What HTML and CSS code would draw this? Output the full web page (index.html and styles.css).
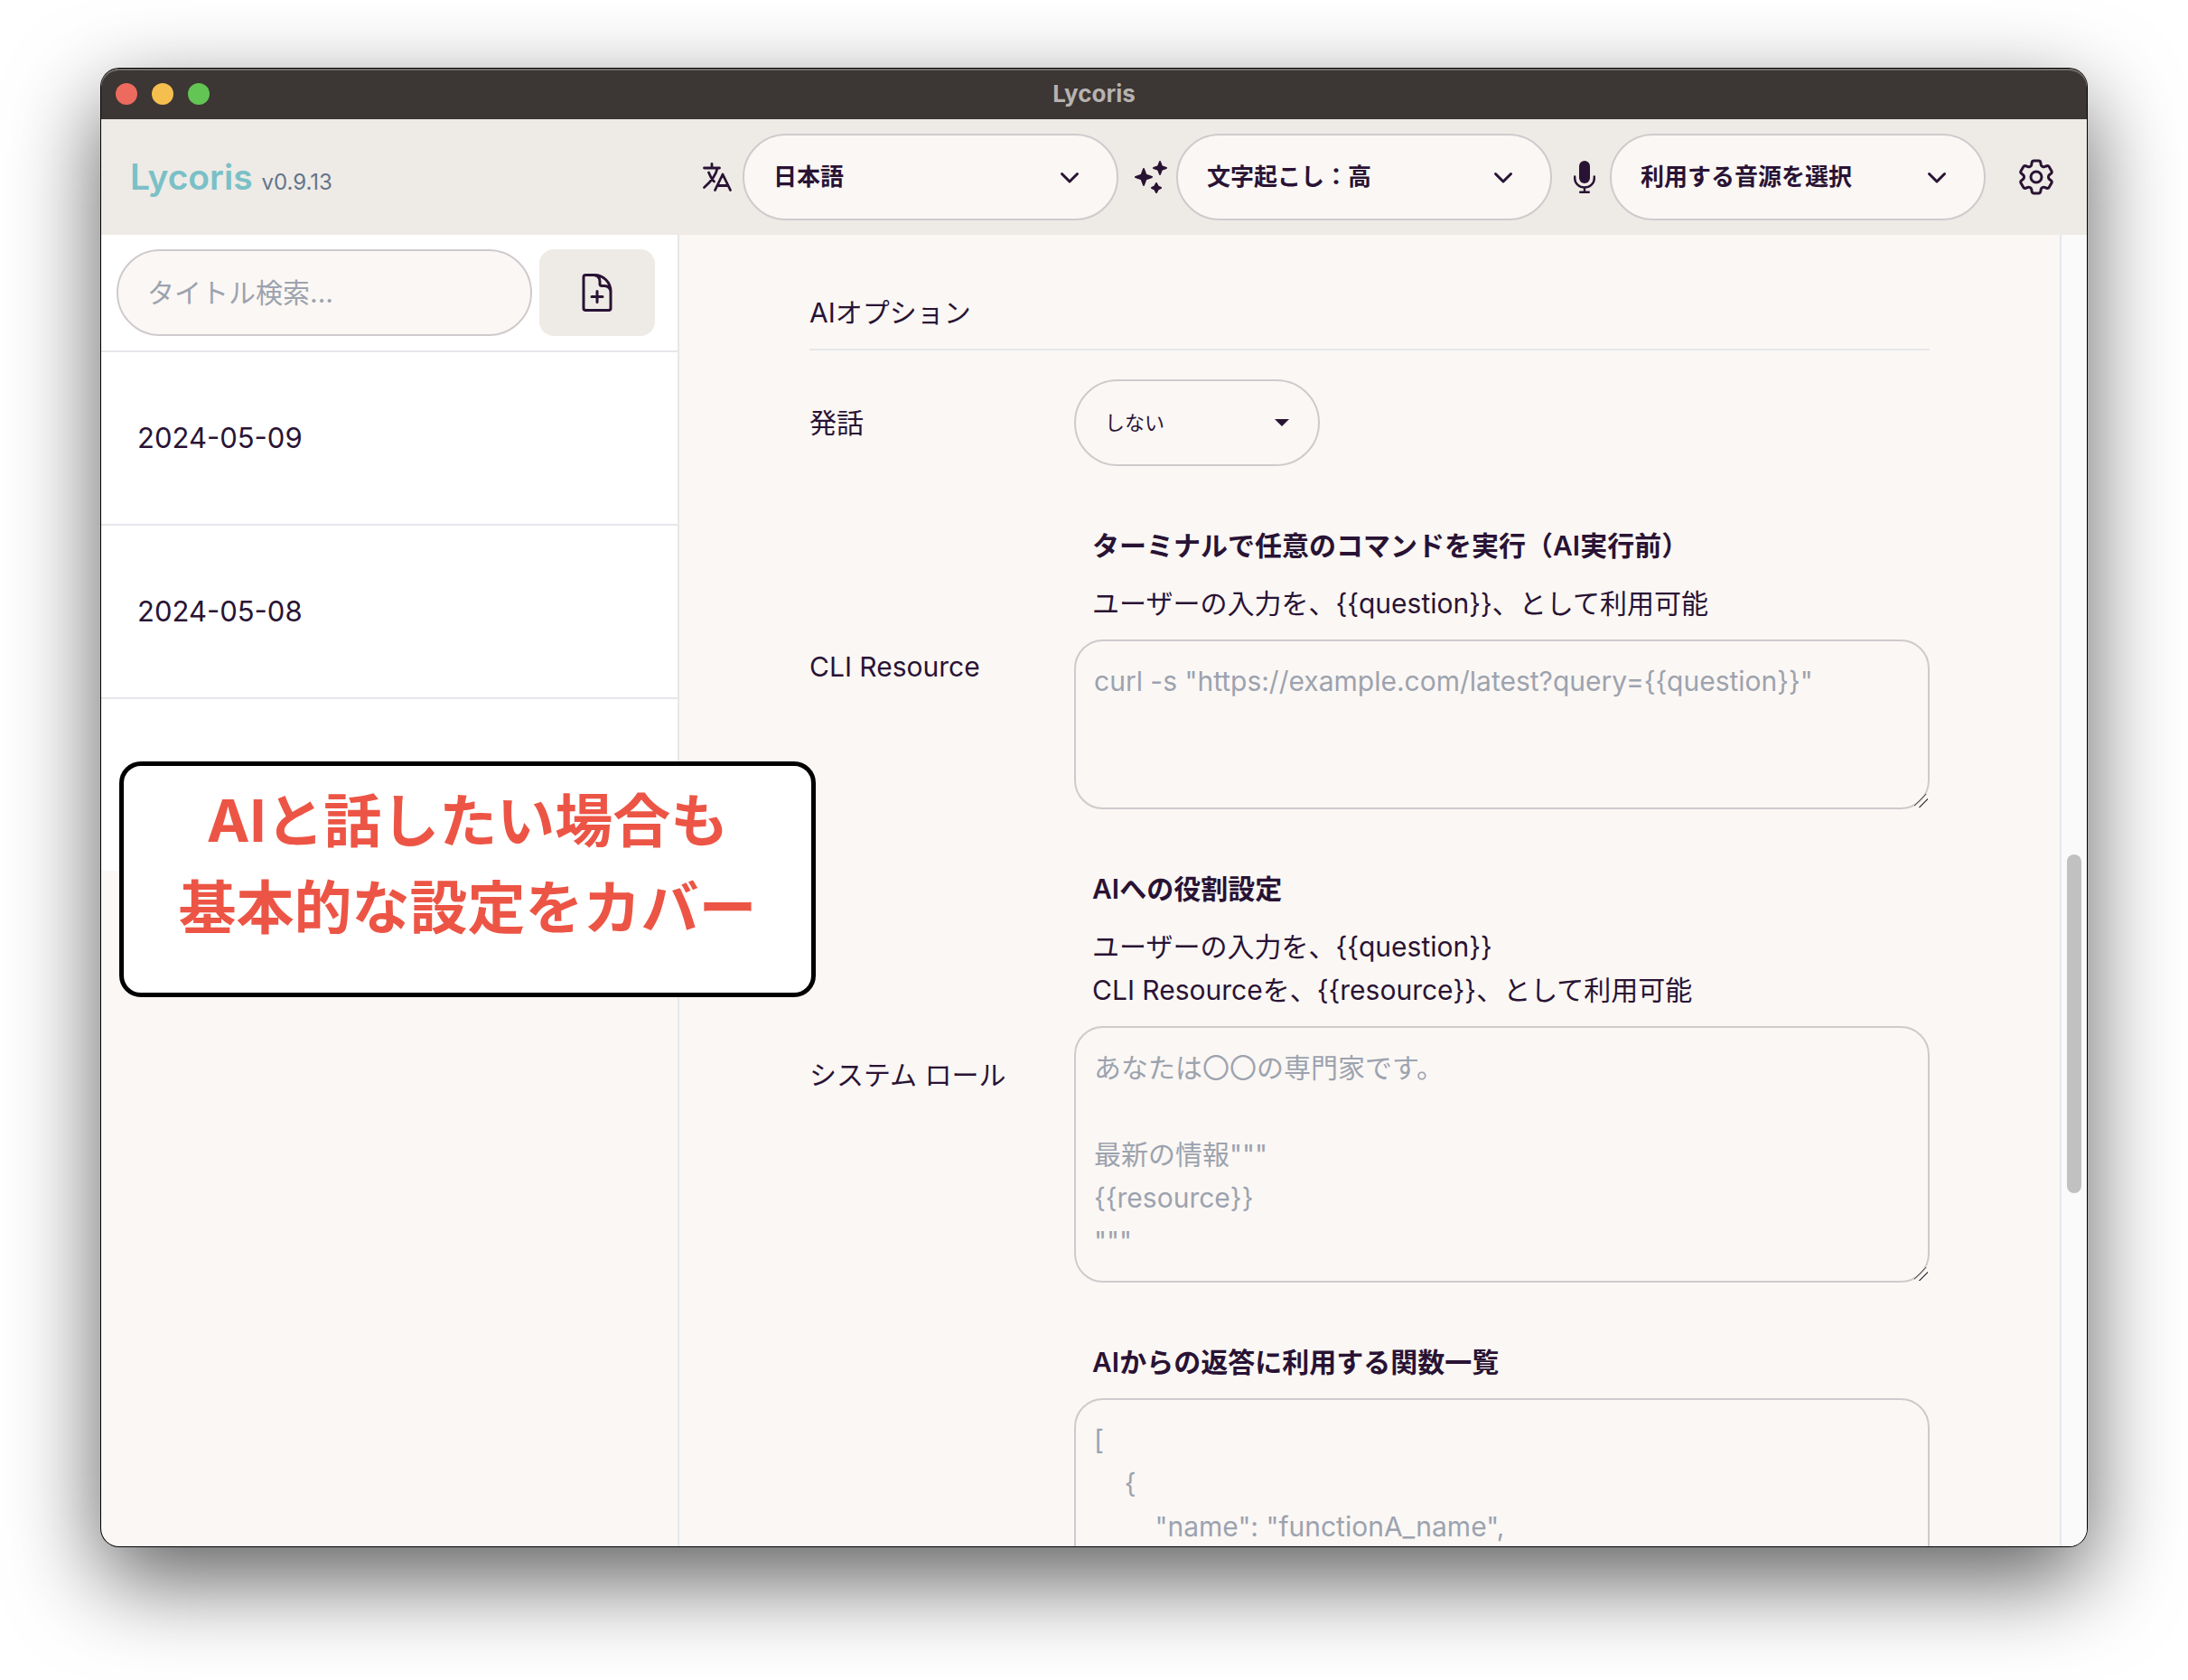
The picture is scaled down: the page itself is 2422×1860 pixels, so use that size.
FILE: index.html
```html
<!DOCTYPE html>
<html lang="ja">
<head>
<meta charset="utf-8">
<meta name="viewport" content="width=device-width, initial-scale=1">
<title>Lycoris</title>
<link rel="stylesheet" href="styles.css">
</head>
<body>
<div class="window">
  <div class="titlebar">
    <div class="lights">
      <span class="light light-close"></span>
      <span class="light light-min"></span>
      <span class="light light-max"></span>
    </div>
    <span class="titlebar-text">Lycoris</span>
  </div>

  <header class="header">
    <h1 class="brand">Lycoris <small class="version">v0.9.13</small></h1>
    <div class="tools">
      <div class="tool">
        <svg class="tool-icon" viewBox="0 0 40 40" fill="none" stroke="currentColor" stroke-width="2.8" stroke-linecap="round" stroke-linejoin="round" aria-hidden="true">
          <path d="M14 5.500V9.500M5.500 10H22.500M20 10.500C18.500 18 13 25 5.500 31.500M10.500 15C12 19 14 22.500 16.500 25M17.500 34.500L26 17L34.500 34.500M20.500 29.500H31.500"/>
        </svg>
        <div class="picker">
          <select class="picker-select" aria-label="言語"><option>日本語</option></select>
          <svg class="picker-arrow" viewBox="0 0 32 32" fill="none" stroke="currentColor" stroke-width="3" stroke-linecap="round" stroke-linejoin="round" aria-hidden="true"><path d="M7.500 12.500L16 21L24.500 12.500"/></svg>
        </div>
      </div>
      <div class="tool">
        <svg class="tool-icon" viewBox="0 0 40 40" fill="currentColor" stroke="currentColor" stroke-width="2" stroke-linejoin="round" aria-hidden="true">
          <path d="M12 11L14.400 17.600L21 20L14.400 22.400L12 29L9.600 22.400L3 20L9.600 17.600Z"/>
          <path d="M30 3L31.900 8.100L37 10L31.900 11.900L30 17L28.100 11.900L23 10L28.100 8.100Z"/>
          <path d="M26 27L27.700 30.300L31 32L27.700 33.700L26 37L24.300 33.700L21 32L24.300 30.300Z"/>
        </svg>
        <div class="picker">
          <select class="picker-select" aria-label="文字起こしの精度"><option>文字起こし：高</option></select>
          <svg class="picker-arrow" viewBox="0 0 32 32" fill="none" stroke="currentColor" stroke-width="3" stroke-linecap="round" stroke-linejoin="round" aria-hidden="true"><path d="M7.500 12.500L16 21L24.500 12.500"/></svg>
        </div>
      </div>
      <div class="tool">
        <svg class="tool-icon" viewBox="0 0 40 40" fill="none" stroke="currentColor" stroke-width="2.400" stroke-linecap="round" aria-hidden="true">
          <rect x="14" y="2" width="12" height="25" rx="6" fill="currentColor" stroke="none"/>
          <path d="M9.200 19.500V21.500A10.800 10 0 0 0 30.800 21.500V19.500M20 32V36.500M15.200 36.800H24.800"/>
        </svg>
        <div class="picker">
          <select class="picker-select" aria-label="音源"><option>利用する音源を選択</option></select>
          <svg class="picker-arrow" viewBox="0 0 32 32" fill="none" stroke="currentColor" stroke-width="3" stroke-linecap="round" stroke-linejoin="round" aria-hidden="true"><path d="M7.500 12.500L16 21L24.500 12.500"/></svg>
        </div>
      </div>
    </div>
    <button class="settings" type="button" aria-label="設定">
      <svg class="icon" viewBox="0 0 24 24" fill="none" stroke="currentColor" stroke-width="1.5" stroke-linecap="round" stroke-linejoin="round" aria-hidden="true">
        <path d="M9.594 3.940c.09-.542.56-.94 1.110-.94h2.593c.55 0 1.020.398 1.110.94l.213 1.281c.063.374.313.686.645.87.074.04.147.083.22.127.325.196.72.257 1.075.124l1.217-.456a1.125 1.125 0 0 1 1.370.49l1.296 2.247a1.125 1.125 0 0 1-.26 1.431l-1.003.827c-.293.241-.438.613-.43.992a7.723 7.723 0 0 1 0 .255c-.008.378.137.75.43.991l1.004.827c.424.35.534.955.26 1.430l-1.298 2.247a1.125 1.125 0 0 1-1.369.491l-1.217-.456c-.355-.133-.75-.072-1.076.124a6.470 6.470 0 0 1-.22.128c-.331.183-.581.495-.644.869l-.213 1.281c-.09.543-.56.94-1.110.94h-2.594c-.55 0-1.019-.398-1.110-.94l-.213-1.281c-.062-.374-.312-.686-.644-.87a6.520 6.520 0 0 1-.22-.127c-.325-.196-.72-.257-1.076-.124l-1.217.456a1.125 1.125 0 0 1-1.369-.49l-1.297-2.247a1.125 1.125 0 0 1 .26-1.431l1.004-.827c.292-.24.437-.613.43-.991a6.932 6.932 0 0 1 0-.255c.007-.38-.138-.751-.43-.992l-1.004-.827a1.125 1.125 0 0 1-.26-1.430l1.297-2.247a1.125 1.125 0 0 1 1.370-.491l1.216.456c.356.133.751.072 1.076-.124.072-.044.146-.086.22-.128.332-.183.582-.495.644-.869l.214-1.280Z"/>
        <path d="M15 12a3 3 0 1 1-6 0 3 3 0 0 1 6 0Z"/>
      </svg>
    </button>
  </header>

  <div class="body">
    <aside class="sidebar">
      <div class="search">
        <input class="search-input" type="text" placeholder="タイトル検索..." aria-label="タイトル検索">
        <button class="new-note" type="button" aria-label="新規作成">
          <svg class="icon" viewBox="0 0 24 24" fill="none" stroke="currentColor" stroke-width="1.5" stroke-linecap="round" stroke-linejoin="round" aria-hidden="true">
            <path d="M19.500 14.250v-2.625a3.375 3.375 0 0 0-3.375-3.375h-1.500A1.125 1.125 0 0 1 13.500 7.125v-1.500a3.375 3.375 0 0 0-3.375-3.375H8.250m3.750 9v6m3-3H9m1.500-12H5.625c-.621 0-1.125.504-1.125 1.125v17.250c0 .621.504 1.125 1.125 1.125h12.750c.621 0 1.125-.504 1.125-1.125V11.250a9 9 0 0 0-9-9Z"/>
          </svg>
        </button>
      </div>
      <ul class="notes">
        <li class="note">2024-05-09</li>
        <li class="note">2024-05-08</li>
        <li class="note"></li>
      </ul>
    </aside>

    <main class="main">
      <form class="options">
        <h2 class="section-title">AIオプション</h2>

        <div class="row">
          <label class="row-label" for="speech">発話</label>
          <div class="speech">
            <select class="speech-select" id="speech"><option>しない</option></select>
            <span class="caret"></span>
          </div>
        </div>

        <div class="row">
          <label class="row-label" for="cli">CLI Resource</label>
          <div class="field">
            <strong class="field-title">ターミナルで任意のコマンドを実行（AI実行前）</strong>
            <p class="field-note">ユーザーの入力を、{{question}}、として利用可能</p>
            <textarea class="field-text" id="cli" rows="3" placeholder="curl -s &quot;https://example.com/latest?query={{question}}&quot;"></textarea>
          </div>
        </div>

        <div class="row">
          <label class="row-label" for="role">システム ロール</label>
          <div class="field">
            <strong class="field-title">AIへの役割設定</strong>
            <p class="field-note">ユーザーの入力を、{{question}}<br>CLI Resourceを、{{resource}}、として利用可能</p>
            <textarea class="field-text" id="role" rows="5" placeholder="あなたは〇〇の専門家です。&#10;&#10;最新の情報&quot;&quot;&quot;&#10;{{resource}}&#10;&quot;&quot;&quot;"></textarea>
          </div>
        </div>

        <div class="row">
          <span class="row-label"></span>
          <div class="field">
            <strong class="field-title">AIからの返答に利用する関数一覧</strong>
            <textarea class="field-text" rows="12" aria-label="関数一覧" placeholder="[&#10;    {&#10;        &quot;name&quot;: &quot;functionA_name&quot;,"></textarea>
          </div>
        </div>
      </form>
    </main>
    <div class="scrollbar"><div class="thumb"></div></div>
  </div>

  <p class="callout">AIと話したい場合も<br>基本的な設定をカバー</p>
</div>
</body>
</html>
```

FILE: styles.css
```css
:root {
  --ink: #291334;
  --paper: #fbf7f4;
  --sand: #eeebe6;
  --line: #e5e7eb;
  --edge: #cfcacd;
  --hint: #9ca3af;
}

* {
  box-sizing: border-box;
}

body {
  margin: 0;
  height: 100vh;
  padding: 76px 112px 148px;
  background: #fff;
  color: var(--ink);
  font: 30px/48px Inter, "Noto Sans CJK JP", sans-serif;
  overflow: hidden;
}

h1, h2, p, ul {
  margin: 0;
  padding: 0;
  font-weight: 400;
}

ul {
  list-style: none;
}

button, input, select, textarea {
  margin: 0;
  color: inherit;
  font: inherit;
}

select {
  appearance: none;
}

::placeholder {
  color: var(--hint);
  opacity: 1;
}

.window {
  position: relative;
  display: flex;
  flex-direction: column;
  height: 100%;
  border-radius: 20px;
  background: var(--paper);
  box-shadow: 0 0 0 1px #000, 0 36px 100px rgba(0, 0, 0, 0.64);
}

.titlebar {
  display: grid;
  grid-template-columns: 1fr auto 1fr;
  align-items: center;
  height: 56px;
  padding: 0 16px;
  border-radius: 20px 20px 0 0;
  background: #3c3634;
  box-shadow: inset 0 2px 0 #716c69;
}

.lights {
  display: flex;
  gap: 16px;
}

.light {
  width: 24px;
  height: 24px;
  border-radius: 50%;
}

.light-close { background: #ed6a5e; }
.light-min { background: #f5bf4f; }
.light-max { background: #62c554; }

.titlebar-text {
  color: #b7b2af;
  font-size: 26px;
  font-weight: 700;
}

.header {
  display: flex;
  align-items: center;
  gap: 32px;
  height: 128px;
  padding: 0 32px;
  background: var(--sand);
}

.brand {
  flex: 1;
  padding-top: 6px;
  color: #7bc0c7;
  font-size: 39px;
  font-weight: 600;
}

.version {
  color: #64748b;
  font-size: 24px;
  font-weight: 400;
}

.tools {
  display: flex;
  gap: 16px;
}

.tool {
  display: flex;
  align-items: center;
  gap: 8px;
}

.tool-icon {
  width: 40px;
  height: 40px;
}

.picker, .speech {
  display: grid;
  align-items: center;
}

.picker > *, .speech > * {
  grid-area: 1 / 1;
}

.picker-select, .speech-select {
  height: 96px;
  padding: 0 32px;
  border: 2px solid var(--edge);
  border-radius: 48px;
  background: var(--paper);
}

.picker-select {
  width: 416px;
  font-size: 26px;
  font-weight: 600;
}

.picker-arrow {
  justify-self: end;
  width: 32px;
  height: 32px;
  margin-right: 38px;
  pointer-events: none;
}

.settings {
  display: flex;
  padding: 0;
  border: 0;
  background: none;
}

.icon {
  width: 48px;
  height: 48px;
}

.body {
  display: flex;
  flex: 1;
  min-height: 0;
  border-radius: 0 0 20px 20px;
  overflow: hidden;
}

.sidebar {
  width: 640px;
  border-right: 2px solid var(--line);
}

.search {
  display: flex;
  gap: 8px;
  padding: 16px 25px 16px 17px;
  border-bottom: 2px solid var(--line);
  background: #fff;
}

.search-input {
  flex: 1;
  min-width: 0;
  height: 96px;
  padding: 0 32px;
  border: 2px solid var(--edge);
  border-radius: 48px;
  background: var(--paper);
}

.new-note {
  display: flex;
  align-items: center;
  justify-content: center;
  width: 128px;
  border: 0;
  border-radius: 16px;
  background: var(--sand);
}

.note {
  display: flex;
  align-items: center;
  height: 192px;
  padding: 0 40px;
  border-bottom: 2px solid var(--line);
  background: #fff;
  font-size: 31px;
}

.note:last-child {
  height: 190px;
  border-bottom: 0;
}

.main {
  flex: 1;
  min-width: 0;
  padding: 62px 144px 0;
  overflow: hidden;
}

.options {
  display: flex;
  flex-direction: column;
  gap: 64px;
}

.section-title {
  margin-bottom: -32px;
  padding-bottom: 16px;
  border-bottom: 2px solid var(--line);
  font-size: 30px;
}

.row {
  display: grid;
  grid-template-columns: 293px 1fr;
  align-items: center;
}

.speech {
  width: 272px;
}

.speech-select {
  width: 100%;
  font-size: 22px;
}

.caret {
  justify-self: end;
  margin-right: 34px;
  border: 8px solid transparent;
  border-top-color: var(--ink);
  border-bottom: 0;
  pointer-events: none;
}

.field {
  display: flex;
  flex-direction: column;
  gap: 16px;
}

.field-title, .field-note {
  padding-left: 20px;
}

.field-title {
  font-weight: 600;
}

.field-text {
  display: block;
  width: 100%;
  padding: 20px;
  border: 2px solid var(--edge);
  border-radius: 32px;
  background: var(--paper);
  resize: vertical;
  overflow: hidden;
}

.field-text::-webkit-resizer {
  background: linear-gradient(135deg, transparent 40%, #555 41%, #555 46%, transparent 47%, transparent 64%, #555 65%, #555 70%, transparent 71%);
}

.scrollbar {
  display: flex;
  justify-content: center;
  width: 30px;
  border-left: 2px solid var(--line);
  background: #fafafa;
}

.thumb {
  width: 16px;
  height: 375px;
  margin-top: 686px;
  border-radius: 8px;
  background: #c1c1c1;
}

.callout {
  position: absolute;
  top: 767px;
  left: 20px;
  width: 771px;
  height: 261px;
  padding-top: 13px;
  border: 5px solid #000;
  border-radius: 24px;
  background: #fff;
  color: #ec5545;
  font-size: 64px;
  font-weight: 700;
  line-height: 96px;
  text-align: center;
}
```
